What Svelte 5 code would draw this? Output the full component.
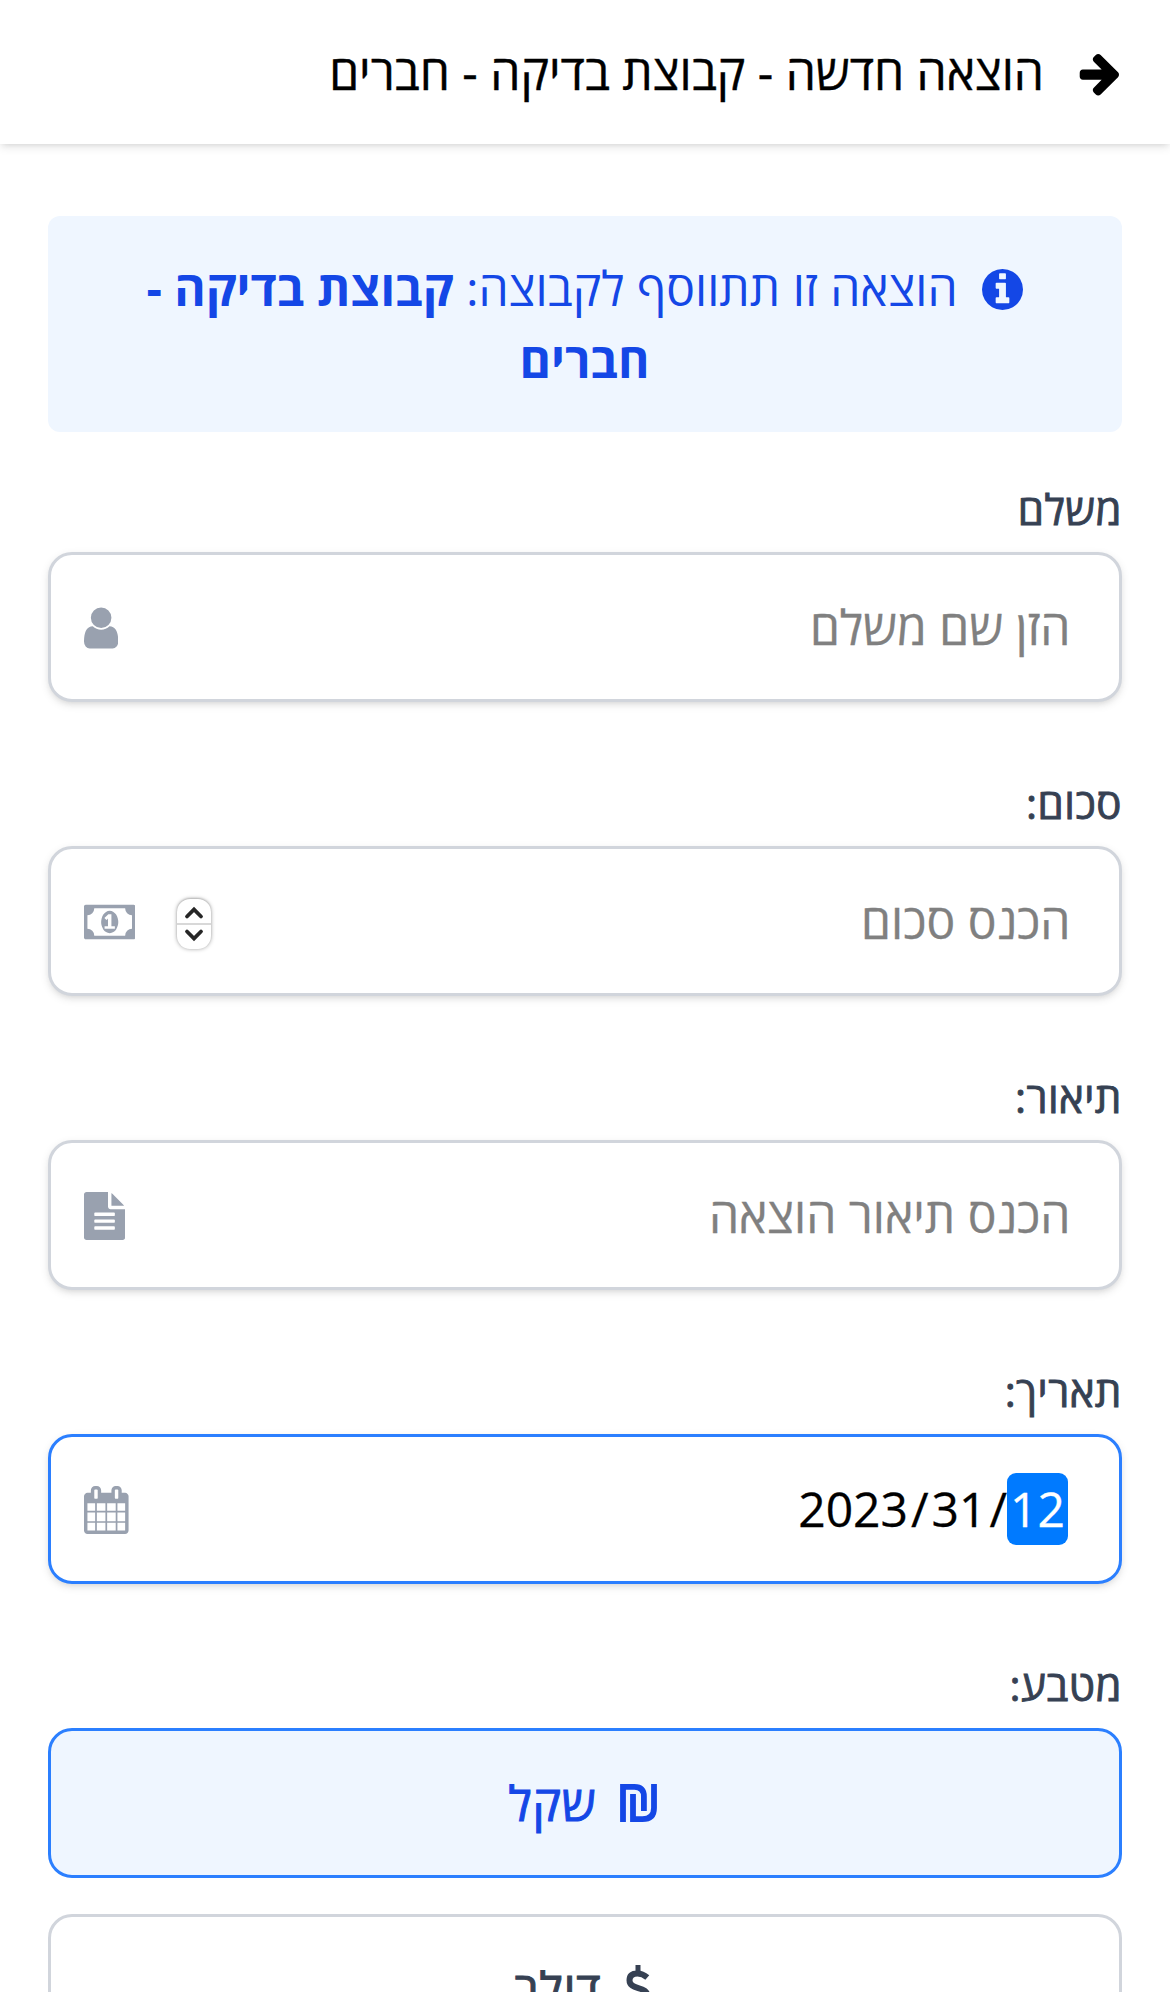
<script>
  const icons = {
    user: {
      box: '256 0 1280 1792',
      d: 'M1536 1399q0 109-62.5 187t-150.5 78h-854q-88 0-150.5-78t-62.5-187q0-85 8.5-160.5t31.5-152 58.5-131 94-89 134.5-34.5q131 128 313 128t313-128q76 0 134.5 34.5t94 89 58.5 131 31.5 152 8.5 160.5zm-256-887q0 159-112.5 271.5t-271.5 112.5-271.5-112.5-112.5-271.5 112.5-271.5 271.5-112.5 271.5 112.5 112.5 271.5z'
    },
    money: {
      box: '0 0 1920 1792',
      d: 'M768 1152h384v-96h-128v-448h-114l-148 137 77 80q42-37 55-57h2v288h-128v96zm512-256q0 70-21 142t-59.5 134-101.5 101-138 39-138-39-101.5-101-59.5-134-21-142 21-142 59.5-134 101.5-101 138-39 138 39 101.5 101 59.5 134 21 142zm512 256v-512q-106 0-181-75t-75-181h-1152q0 106-75 181t-181 75v512q106 0 181 75t75 181h1152q0-106 75-181t181-75zm128-832v1152q0 26-19 45t-45 19h-1792q-26 0-45-19t-19-45v-1152q0-26 19-45t45-19h1792q26 0 45 19t19 45z'
    },
    file: {
      box: '128 0 1536 1792',
      d: 'M1596 476q14 14 28 36h-472v-472q22 14 36 28zm-476 164h544v1056q0 40-28 68t-68 28h-1344q-40 0-68-28t-28-68v-1600q0-40 28-68t68-28h800v544q0 40 28 68t68 28zm160 736v-64q0-14-9-23t-23-9h-704q-14 0-23 9t-9 23v64q0 14 9 23t23 9h704q14 0 23-9t9-23zm0-256v-64q0-14-9-23t-23-9h-704q-14 0-23 9t-9 23v64q0 14 9 23t23 9h704q14 0 23-9t9-23zm0-256v-64q0-14-9-23t-23-9h-704q-14 0-23 9t-9 23v64q0 14 9 23t23 9h704q14 0 23-9t9-23z'
    },
    calendar: {
      box: '64 0 1664 1792',
      d: 'M192 1664h288v-288h-288v288zm352 0h320v-288h-320v288zm-352-352h288v-320h-288v320zm352 0h320v-320h-320v320zm-352-384h288v-288h-288v288zm736 736h320v-288h-320v288zm-384-736h320v-288h-320v288zm768 736h288v-288h-288v288zm-384-352h320v-320h-320v320zm-352-864v-288q0-13-9.5-22.5t-22.5-9.5h-64q-13 0-22.5 9.5t-9.5 22.5v288q0 13 9.5 22.5t22.5 9.5h64q13 0 22.5-9.5t9.5-22.5zm736 864h288v-320h-288v320zm-384-384h320v-288h-320v288zm384 0h288v-288h-288v288zm32-480v-288q0-13-9.5-22.5t-22.5-9.5h-64q-13 0-22.5 9.5t-9.5 22.5v288q0 13 9.5 22.5t22.5 9.5h64q13 0 22.5-9.5t9.5-22.5zm384-64v1280q0 52-38 90t-90 38h-1408q-52 0-90-38t-38-90v-1280q0-52 38-90t90-38h128v-96q0-66 47-113t113-47h64q66 0 113 47t47 113v96h384v-96q0-66 47-113t113-47h64q66 0 113 47t47 113v96h128q52 0 90 38t38 90z'
    }
  };

  const fields = [
    { label: 'משלם', hint: 'הזן שם משלם', icon: 'user' },
    { label: 'סכום:', hint: 'הכנס סכום', icon: 'money', stepper: true },
    { label: 'תיאור:', hint: 'הכנס תיאור הוצאה', icon: 'file' },
    { label: 'תאריך:', date: ['2023', '31', '12'], icon: 'calendar' }
  ];
</script>

<div class="page" dir="rtl">
  <header>
    <svg class="arrow" viewBox="64 0 1536 1792"><path d="M1600 960q0 54-37 91l-651 651q-39 37-91 37-51 0-90-37l-75-75q-38-38-38-91t38-91l293-293h-704q-52 0-84.5-37.5t-32.5-90.5v-128q0-53 32.5-90.5t84.5-37.5h704l-293-294q-38-36-38-90t38-90l75-75q38-38 90-38 53 0 91 38l651 651q37 35 37 90z" /></svg>
    <h1>הוצאה חדשה - קבוצת בדיקה - חברים</h1>
  </header>

  <main>
    <p class="notice">
      <svg class="info" viewBox="128 128 1536 1536"><path d="M1152 1376v-160q0-14-9-23t-23-9h-96v-512q0-14-9-23t-23-9h-320q-14 0-23 9t-9 23v160q0 14 9 23t23 9h96v320h-96q-14 0-23 9t-9 23v160q0 14 9 23t23 9h448q14 0 23-9t9-23zm-128-896v-160q0-14-9-23t-23-9h-192q-14 0-23 9t-9 23v160q0 14 9 23t23 9h192q14 0 23-9t9-23zm640 416q0 209-103 385.5t-279.5 279.5-385.5 103-385.5-103-279.5-279.5-103-385.5 103-385.5 279.5-279.5 385.5-103 385.5 103 279.5 279.5 103 385.5z" /></svg>הוצאה זו תתווסף לקבוצה: <b>קבוצת בדיקה - חברים</b>
    </p>

    {#each fields as field}
      <section class="field">
        <div class="label">{field.label}</div>
        <div class="input" class:focused={field.date}>
          {#if field.date}
            <div class="date" dir="ltr">
              <span class="part">{field.date[0]}</span><span>/</span><span class="part">{field.date[1]}</span><span>/</span><span class="part selected">{field.date[2]}</span>
            </div>
          {:else}
            <span class="hint">{field.hint}</span>
          {/if}
          <div class="tools">
            {#if field.stepper}
              <div class="stepper">
                <svg viewBox="0 0 34 24"><path d="M10 17.5L17 10.5L24 17.5" /></svg>
                <svg viewBox="0 0 34 24"><path d="M10 6.5L17 13.5L24 6.5" /></svg>
              </div>
            {/if}
            <svg class="icon" viewBox={icons[field.icon].box}><path d={icons[field.icon].d} /></svg>
          </div>
        </div>
      </section>
    {/each}

    <section class="field">
      <div class="label">מטבע:</div>
      <div class="choices">
        <div class="choice active">
          <svg class="shekel" viewBox="0 0 37 38"><path d="M3 38V2.9H14.5Q23.9 2.9 23.9 12.5V27" /><path d="M13 10V35.1H22.5Q34 35.1 34 24V0" /></svg>
          <span>שקל</span>
        </div>
        <div class="choice">
          <svg class="dollar" viewBox="0 0 26 48"><path d="M22.3 12.5Q17.5 8.4 12.5 8.4Q4.5 8.4 4.5 15.3C4.5 25.5 22.5 20.5 22.5 31.5Q22.5 39.3 13 39.3Q6.5 39.3 2 34.5" /><path class="bar" d="M13 0V8M13 39V46" /></svg>
          <span>דולר</span>
        </div>
      </div>
    </section>
  </main>
</div>

<style>
  :global(body) { margin: 0; background: #fff; }
  .page {
    height: 1992px;
    overflow: hidden;
    background: #fff;
    color: #000;
    font-family: 'Open Sans', 'Noto Sans', sans-serif;
    font-size: 48px;
    line-height: 72px;
  }
  svg { display: block; flex: none; fill: currentColor; }
  header {
    display: flex;
    align-items: center;
    gap: 34px;
    height: 144px;
    box-sizing: border-box;
    padding: 0 51px;
    box-shadow: 0 3px 9px rgba(0, 0, 0, 0.1), 0 3px 6px -3px rgba(0, 0, 0, 0.1);
  }
  h1 { margin: 0; font-size: 48px; font-weight: 400; -webkit-text-stroke: 0.4px currentColor; }
  .arrow { width: 41px; height: 48px; margin-top: 2px; }
  main { padding: 72px 48px 0; }
  .notice {
    margin: 0 0 48px;
    padding: 36px 36.5px 36px 35.5px;
    border-radius: 12px;
    background: #eff6ff;
    color: #1447e6;
    text-align: center;
  }
  .info { display: inline-block; width: 41px; height: 41px; margin-left: 24px; vertical-align: -3.5px; }
  .field { margin-bottom: 72px; }
  .label {
    margin: -1px 0 13px;
    font-size: 42px;
    line-height: 60px;
    letter-spacing: 0.5px;
    color: #364153;
    -webkit-text-stroke: 0.9px currentColor;
  }
  .input, .choice {
    display: flex;
    align-items: center;
    height: 150px;
    box-sizing: border-box;
    border: 3px solid #d1d5dc;
    border-radius: 24px;
  }
  .input {
    justify-content: space-between;
    padding: 0 48px 0 33px;
    background: #fff;
    box-shadow: 0 3px 9px rgba(0, 0, 0, 0.1), 0 3px 6px -3px rgba(0, 0, 0, 0.1);
  }
  .focused, .active { border-color: #2b7fff; }
  .hint { margin-right: 0.5px; color: #808080; -webkit-text-stroke: 0.3px currentColor; }
  .tools { display: flex; align-items: center; gap: 41.5px; color: #99a1af; }
  .icon { height: 48px; width: auto; margin-top: 2px; }
  .stepper {
    width: 34px;
    margin-top: 5px;
    border-radius: 13px;
    background: #fff;
    box-shadow: 0 0 4px rgba(0, 0, 0, 0.35), 0 -1px 2px rgba(0, 0, 0, 0.15);
  }
  .stepper svg { width: 34px; height: 24px; fill: none; stroke: #262626; stroke-width: 3.8; stroke-linecap: round; }
  .stepper svg + svg { border-top: 2px solid #d8d8d8; }
  .date { display: flex; padding-right: 3px; -webkit-text-stroke: 0.3px currentColor; }
  .part { padding: 0 3px; }
  .selected { border-radius: 9px; background: #007aff; color: #fff; }
  .choices { display: flex; flex-direction: column; gap: 36px; }
  .choice { justify-content: center; gap: 24px; padding-right: 5px; color: #364153; }
  .choice span { letter-spacing: 0.7px; margin-left: 1px; -webkit-text-stroke: 1px currentColor; }
  .active { background: #eff6ff; color: #1447e6; }
  .shekel { width: 37px; height: 38px; fill: none; stroke: currentColor; stroke-width: 5.8; }
  .dollar { width: 26px; height: 48px; fill: none; stroke: currentColor; stroke-width: 6; }
  .bar { stroke-width: 5; }
</style>
